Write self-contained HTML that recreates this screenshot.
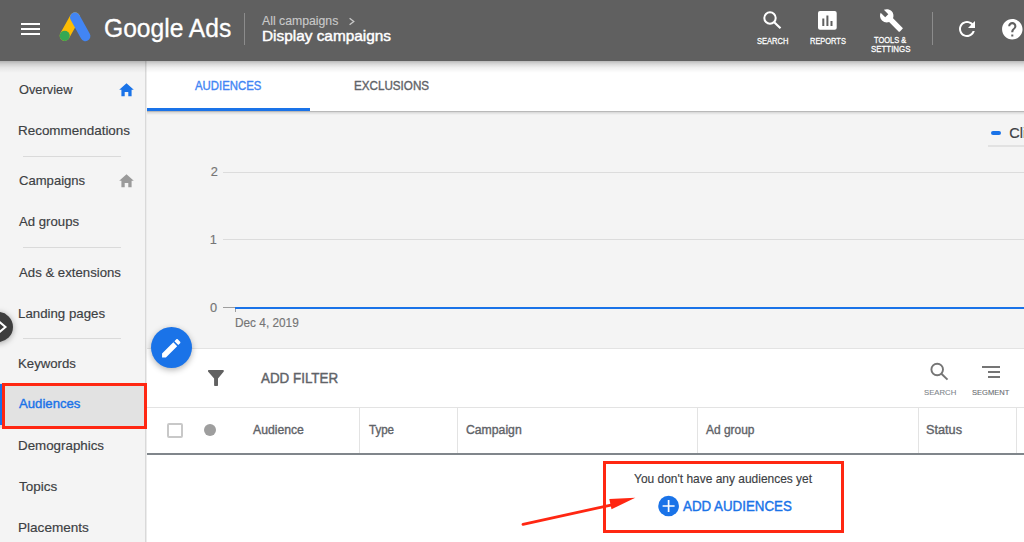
<!DOCTYPE html>
<html><head><meta charset="utf-8">
<style>
*{margin:0;padding:0;box-sizing:border-box}
html,body{width:1024px;height:542px;overflow:hidden;background:#fff;font-family:"Liberation Sans",sans-serif}
.a{position:absolute}
.t{position:absolute;white-space:nowrap;line-height:1;transform-origin:0 0}
svg{position:absolute;overflow:visible}
</style></head><body>
<!-- main backgrounds -->
<div class="a" style="left:146px;top:61px;width:878px;height:50px;background:#fff"></div>
<div class="a" style="left:146px;top:111px;width:878px;height:237px;background:#f4f4f4"></div>
<div class="a" style="left:146px;top:111px;width:878px;height:1px;background:#b9b9b9"></div>
<div class="a" style="left:146px;top:112px;width:878px;height:3px;background:linear-gradient(#d6d6d6,#f4f4f4)"></div>
<div class="a" style="left:146px;top:108.4px;width:164px;height:2.6px;background:#1a73e8"></div>
<!-- legend -->
<div class="a" style="left:991px;top:131px;width:10px;height:4px;border-radius:2px;background:#1a73e8"></div>
<div class="a" style="left:988px;top:145px;width:36px;height:2px;background:#e2e2e2"></div>
<!-- gridlines -->
<div class="a" style="left:223px;top:171.5px;width:801px;height:1px;background:#dcdcdc"></div>
<div class="a" style="left:223px;top:239px;width:801px;height:1px;background:#dcdcdc"></div>
<div class="a" style="left:223px;top:307px;width:12px;height:1px;background:#9e9e9e"></div>
<div class="a" style="left:235px;top:307px;width:1px;height:5px;background:#9e9e9e"></div>
<div class="a" style="left:235px;top:306.6px;width:789px;height:2px;background:#1a73e8"></div>
<!-- filter bar -->
<div class="a" style="left:146px;top:348px;width:878px;height:1px;background:#e3e3e3"></div>
<svg style="left:207px;top:369px" width="18" height="18" viewBox="0 0 18 18"><path d="M1 1.7 Q1 1 1.7 1 L16.1 1 Q16.8 1 16.8 1.7 L16.8 2.4 L11 9.4 L11 16.2 Q11 16.9 10.3 16.9 L7.8 16.9 Q7.1 16.9 7.1 16.2 L7.1 9.4 L1 2.4 Z" fill="#616161"/></svg>
<svg style="left:928px;top:361px" width="22" height="22" viewBox="0 0 22 22"><circle cx="9.2" cy="8.5" r="5.8" fill="none" stroke="#757575" stroke-width="1.9"/><path d="M13.4 12.7 L19.5 18.6" stroke="#757575" stroke-width="2" /></svg>
<div class="a" style="left:981.8px;top:365.5px;width:18.2px;height:2px;background:#757575"></div>
<div class="a" style="left:988px;top:370.7px;width:12px;height:2px;background:#757575"></div>
<div class="a" style="left:988px;top:375.9px;width:12px;height:2px;background:#757575"></div>
<!-- table header -->
<div class="a" style="left:146px;top:407px;width:878px;height:1px;background:#e3e3e3"></div>
<div class="a" style="left:146px;top:453px;width:878px;height:2px;background:#80868b"></div>
<div class="a" style="left:358.5px;top:407px;width:1px;height:46px;background:#e3e3e3"></div>
<div class="a" style="left:456.7px;top:407px;width:1px;height:46px;background:#e3e3e3"></div>
<div class="a" style="left:696.7px;top:407px;width:1px;height:46px;background:#e3e3e3"></div>
<div class="a" style="left:918px;top:407px;width:1px;height:46px;background:#e3e3e3"></div>
<div class="a" style="left:1016.3px;top:407px;width:1px;height:46px;background:#e3e3e3"></div>
<div class="a" style="left:167.2px;top:422.7px;width:16px;height:15.5px;border:2px solid #c8c8c8;border-radius:2px"></div>
<div class="a" style="left:203.9px;top:424.1px;width:12.2px;height:12.2px;border-radius:50%;background:#9e9e9e"></div>
<!-- empty state -->
<div class="a" style="left:602.5px;top:460.6px;width:241.5px;height:72.4px;border:3px solid #ff2712"></div>
<svg style="left:658px;top:495px" width="22" height="22" viewBox="0 0 22 22"><circle cx="10.6" cy="11" r="10.35" fill="#1a73e8"/><path d="M10.6 5 V17 M4.6 11 H16.6" stroke="#fff" stroke-width="1.7"/></svg>
<svg style="left:0;top:0" width="1024" height="542"><path d="M523 524.4 L612 504.8" stroke="#ff2712" stroke-width="2.8" stroke-linecap="round"/><path d="M635.3 497.8 L609.3 499 L611.5 509.2 Z" fill="#ff2712"/></svg>

<!-- sidebar -->
<div class="a" style="left:0;top:61px;width:145px;height:481px;background:#f4f4f4"></div>
<div class="a" style="left:145px;top:61px;width:1px;height:481px;background:#d9d9d9"></div><div class="a" style="left:146px;top:61px;width:1px;height:481px;background:#ececec"></div>
<div class="a" style="left:22.5px;top:156px;width:98.5px;height:1px;background:#dadada"></div>
<div class="a" style="left:22.5px;top:247px;width:98.5px;height:1px;background:#dadada"></div>
<div class="a" style="left:22.5px;top:338px;width:98.5px;height:1px;background:#dadada"></div>
<div class="a" style="left:0;top:383px;width:146px;height:45px;background:#e2e2e2"></div>
<div class="a" style="left:0;top:384px;width:2px;height:41px;background:#1a73e8"></div>
<div class="a" style="left:2.4px;top:382.6px;width:144.6px;height:46px;border:3px solid #ff2712"></div>
<svg style="left:119px;top:83px" width="15" height="14" viewBox="0 0 15 14"><path d="M7.5 0.3 L14.8 6.8 L12.6 6.8 L12.6 13.3 L9.3 13.3 L9.3 9 L5.7 9 L5.7 13.3 L2.4 13.3 L2.4 6.8 L0.2 6.8 Z" fill="#1a73e8"/></svg>
<svg style="left:119.4px;top:174px" width="15" height="14" viewBox="0 0 15 14"><path d="M7.5 0.3 L14.8 6.8 L12.6 6.8 L12.6 13.3 L9.3 13.3 L9.3 9 L5.7 9 L5.7 13.3 L2.4 13.3 L2.4 6.8 L0.2 6.8 Z" fill="#9a9a9a"/></svg>
<div class="a" style="left:-17px;top:311.6px;width:30px;height:30px;border-radius:50%;background:#3d3d3d;box-shadow:0 1px 6px rgba(0,0,0,.35)"></div>
<svg style="left:0;top:320px" width="10" height="14" viewBox="0 0 10 14"><path d="M-1 1.5 L5.5 7 L-1 12.5" fill="none" stroke="#fff" stroke-width="2"/></svg>

<!-- FAB -->
<div class="a" style="left:150.7px;top:326.7px;width:41px;height:41px;border-radius:50%;background:#1a73e8;box-shadow:0 2px 6px rgba(0,0,0,.3)"></div>
<svg style="left:158.6px;top:335.6px" width="24.5" height="24.5" viewBox="0 0 24 24"><path d="M3 17.25V21h3.75L17.81 9.94l-3.75-3.75L3 17.25zM20.71 7.04c.39-.39.39-1.02 0-1.41l-2.34-2.34c-.39-.39-1.02-.39-1.41 0l-1.83 1.83 3.75 3.75 1.83-1.83z" fill="#fff"/></svg>

<!-- header -->
<div class="a" style="left:0;top:0;width:1024px;height:61px;background:#606060"></div>
<div class="a" style="left:0;top:61px;width:1024px;height:12px;background:linear-gradient(rgba(0,0,0,.27),rgba(0,0,0,.15) 25%,rgba(0,0,0,.06) 55%,rgba(0,0,0,0))"></div>
<div class="a" style="left:21.2px;top:22.5px;width:18.8px;height:2px;background:#fff"></div>
<div class="a" style="left:21.2px;top:27.5px;width:18.8px;height:2px;background:#fff"></div>
<div class="a" style="left:21.2px;top:32.6px;width:18.8px;height:2px;background:#fff"></div>
<svg style="left:0;top:0" width="100" height="60" viewBox="0 0 100 60"><path d="M75 17.3 L64.7 35.8" stroke="#fbbc04" stroke-width="10" stroke-linecap="round"/><path d="M75 17.3 L85.4 36.2" stroke="#4285f4" stroke-width="10" stroke-linecap="round"/><circle cx="64.7" cy="35.8" r="5.1" fill="#34a853"/></svg>
<div class="a" style="left:244.2px;top:12.5px;width:1px;height:32.5px;background:#8c8c8c"></div>
<svg style="left:348px;top:17px" width="8" height="9" viewBox="0 0 8 9"><path d="M1.6 1.2 L5.8 4.5 L1.6 7.8" fill="none" stroke="#c9c9c9" stroke-width="1.3"/></svg>
<svg style="left:760px;top:9px" width="24" height="22" viewBox="0 0 24 22"><circle cx="10" cy="9" r="5.7" fill="none" stroke="#fff" stroke-width="2"/><path d="M14.2 13.2 L20.5 19.3" stroke="#fff" stroke-width="2.2"/></svg>
<svg style="left:818px;top:11px" width="19" height="19" viewBox="0 0 19 19"><rect x="0" y="0" width="18.7" height="18.8" rx="2" fill="#fff"/><rect x="4.3" y="7.5" width="2" height="7.5" fill="#606060"/><rect x="8.4" y="4.5" width="2" height="10.5" fill="#606060"/><rect x="12.5" y="10" width="2" height="5" fill="#606060"/></svg>
<svg style="left:878.5px;top:7.6px" width="24.8" height="24.8" viewBox="0 0 24 24"><path d="M22.7 19l-9.1-9.1c.9-2.3.4-5-1.5-6.9-2-2-5-2.4-7.4-1.3L9 6 6 9 1.6 4.7C.4 7.1.9 10.1 2.9 12.1c1.900 1.9 4.6 2.4 6.9 1.5l9.1 9.1c.4.4 1 .4 1.4 0l2.3-2.3c.5-.4.5-1.100.1-1.400z" fill="#fff"/></svg>
<div class="a" style="left:931.9px;top:12.2px;width:1px;height:32.6px;background:#8c8c8c"></div>
<svg style="left:955px;top:17px" width="24" height="24" viewBox="0 0 24 24"><path d="M17.65 6.35C16.2 4.9 14.21 4 12 4c-4.42 0-7.99 3.580-7.99 8s3.57 8 7.99 8c3.73 0 6.840-2.550 7.73-6h-2.080c-.82 2.330-3.040 4-5.650 4-3.31 0-6-2.690-6-6s2.690-6 6-6c1.660 0 3.140.69 4.220 1.780L13 11h7V4l-2.350 2.350z" fill="#fff"/></svg>
<svg style="left:999.8px;top:16.6px" width="24.6" height="24.6" viewBox="0 0 24 24"><path fill-rule="evenodd" d="M12 2C6.48 2 2 6.48 2 12s4.48 10 10 10 10-4.48 10-10S17.52 2 12 2zm1 17h-2v-2h2v2zm2.07-7.75l-.9.92C13.45 12.9 13 13.5 13 15h-2v-.5c0-1.1.45-2.1 1.170-2.830l1.24-1.26c.37-.36.59-.86.59-1.41 0-1.1-.9-2-2-2s-2 .9-2 2H8c0-2.21 1.79-4 4-4s4 1.79 4 4c0 .88-.36 1.68-.93 2.25z" fill="#fff"/></svg>

<div id="gads" class="t" style="left:104.07px;top:14.67px;font-size:26.5px;color:#fff;-webkit-text-stroke:0.32px #fff;transform:scaleX(0.9289);">Google Ads</div>
<div id="allc" class="t" style="left:262.40px;top:15.24px;font-size:12px;color:#c9c9c9;-webkit-text-stroke:0.14px #c9c9c9;transform:scaleX(1.0213);">All campaigns</div>
<div id="disp" class="t" style="left:261.64px;top:29.33px;font-size:14.5px;color:#fff;-webkit-text-stroke:0.43px #fff;transform:scaleX(1.0603);">Display campaigns</div>
<div id="hsearch" class="t" style="left:757.00px;top:36.64px;font-size:8.7px;color:#fff;-webkit-text-stroke:0.26px #fff;transform:scaleX(0.8667);">SEARCH</div>
<div id="hreports" class="t" style="left:809.50px;top:36.64px;font-size:8.7px;color:#fff;-webkit-text-stroke:0.26px #fff;transform:scaleX(0.8571);">REPORTS</div>
<div id="htools" class="t" style="left:874.30px;top:35.84px;font-size:8.7px;color:#fff;-webkit-text-stroke:0.26px #fff;transform:scaleX(0.8605);">TOOLS &amp;</div>
<div id="hsett" class="t" style="left:871.30px;top:44.94px;font-size:8.7px;color:#fff;-webkit-text-stroke:0.26px #fff;transform:scaleX(0.9070);">SETTINGS</div>
<div id="s1" class="t" style="left:19.20px;top:83.10px;font-size:13px;color:#3c4043;-webkit-text-stroke:0.16px #3c4043;transform:scaleX(0.9852);">Overview</div>
<div id="s2" class="t" style="left:18.17px;top:124.00px;font-size:13px;color:#3c4043;-webkit-text-stroke:0.16px #3c4043;transform:scaleX(1.0336);">Recommendations</div>
<div id="s3" class="t" style="left:19.00px;top:174.30px;font-size:13px;color:#3c4043;-webkit-text-stroke:0.16px #3c4043;transform:scaleX(1.0061);">Campaigns</div>
<div id="s4" class="t" style="left:19.00px;top:215.40px;font-size:13px;color:#3c4043;-webkit-text-stroke:0.16px #3c4043;transform:scaleX(1.0136);">Ad groups</div>
<div id="s5" class="t" style="left:19.10px;top:265.60px;font-size:13px;color:#3c4043;-webkit-text-stroke:0.16px #3c4043;transform:scaleX(1.0150);">Ads &amp; extensions</div>
<div id="s6" class="t" style="left:18.08px;top:306.80px;font-size:13px;color:#3c4043;-webkit-text-stroke:0.16px #3c4043;transform:scaleX(1.0202);">Landing pages</div>
<div id="s7" class="t" style="left:18.09px;top:356.80px;font-size:13px;color:#3c4043;-webkit-text-stroke:0.16px #3c4043;transform:scaleX(1.0143);">Keywords</div>
<div id="s8" class="t" style="left:19.30px;top:397.40px;font-size:13px;color:#1a73e8;-webkit-text-stroke:0.39px #1a73e8;transform:scaleX(1.0115);">Audiences</div>
<div id="s9" class="t" style="left:17.97px;top:438.80px;font-size:13px;color:#3c4043;-webkit-text-stroke:0.16px #3c4043;transform:scaleX(1.0265);">Demographics</div>
<div id="s10" class="t" style="left:19.00px;top:480.00px;font-size:13px;color:#3c4043;-webkit-text-stroke:0.16px #3c4043;transform:scaleX(1.0351);">Topics</div>
<div id="s11" class="t" style="left:17.96px;top:520.70px;font-size:13px;color:#3c4043;-webkit-text-stroke:0.16px #3c4043;transform:scaleX(1.0433);">Placements</div>
<div id="tab1" class="t" style="left:195.00px;top:79.62px;font-size:12.5px;color:#4285f4;-webkit-text-stroke:0.38px #4285f4;transform:scaleX(0.9096);">AUDIENCES</div>
<div id="tab2" class="t" style="left:354.47px;top:79.62px;font-size:12.5px;color:#5f6368;-webkit-text-stroke:0.38px #5f6368;transform:scaleX(0.9316);">EXCLUSIONS</div>
<div id="y2" class="t" style="left:210.80px;top:166.36px;font-size:12.8px;color:#757575;-webkit-text-stroke:0.15px #757575;">2</div>
<div id="y1" class="t" style="left:209.80px;top:233.96px;font-size:12.8px;color:#757575;-webkit-text-stroke:0.15px #757575;">1</div>
<div id="y0" class="t" style="left:210.10px;top:301.86px;font-size:12.8px;color:#757575;-webkit-text-stroke:0.15px #757575;">0</div>
<div id="date" class="t" style="left:235.05px;top:316.90px;font-size:12.4px;color:#757575;-webkit-text-stroke:0.15px #757575;transform:scaleX(0.9545);">Dec 4, 2019</div>
<div id="cli" class="t" style="left:1009.30px;top:126.13px;font-size:14.5px;color:#3c4043;-webkit-text-stroke:0.17px #3c4043;">Cli</div>
<div id="addf" class="t" style="left:260.60px;top:370.66px;font-size:14.7px;color:#5f6368;-webkit-text-stroke:0.44px #5f6368;transform:scaleX(0.9119);">ADD FILTER</div>
<div id="fsearch" class="t" style="left:923.54px;top:389.14px;font-size:8.1px;color:#80868b;-webkit-text-stroke:0.10px #80868b;transform:scaleX(0.9563);">SEARCH</div>
<div id="fseg" class="t" style="left:971.80px;top:389.14px;font-size:8.1px;color:#6a6e72;-webkit-text-stroke:0.24px #6a6e72;transform:scaleX(0.9325);-webkit-text-stroke:0.12px #6a6e72;">SEGMENT</div>
<div id="c1" class="t" style="left:253.10px;top:423.94px;font-size:12px;color:#5f6368;-webkit-text-stroke:0.36px #5f6368;transform:scaleX(1.0160);">Audience</div>
<div id="c2" class="t" style="left:368.60px;top:423.94px;font-size:12px;color:#5f6368;-webkit-text-stroke:0.36px #5f6368;transform:scaleX(0.9615);">Type</div>
<div id="c3" class="t" style="left:466.20px;top:423.94px;font-size:12px;color:#5f6368;-webkit-text-stroke:0.36px #5f6368;transform:scaleX(1.0185);">Campaign</div>
<div id="c4" class="t" style="left:706.20px;top:423.94px;font-size:12px;color:#5f6368;-webkit-text-stroke:0.36px #5f6368;transform:scaleX(0.9959);">Ad group</div>
<div id="c5" class="t" style="left:925.84px;top:423.94px;font-size:12px;color:#5f6368;-webkit-text-stroke:0.36px #5f6368;transform:scaleX(1.0576);">Status</div>
<div id="empty" class="t" style="left:634.40px;top:471.90px;font-size:13px;color:#3c4043;-webkit-text-stroke:0.16px #3c4043;transform:scaleX(0.9201);">You don't have any audiences yet</div>
<div id="adda" class="t" style="left:683.40px;top:498.87px;font-size:14.8px;color:#1a73e8;-webkit-text-stroke:0.44px #1a73e8;transform:scaleX(0.9000);">ADD AUDIENCES</div>
</body></html>
